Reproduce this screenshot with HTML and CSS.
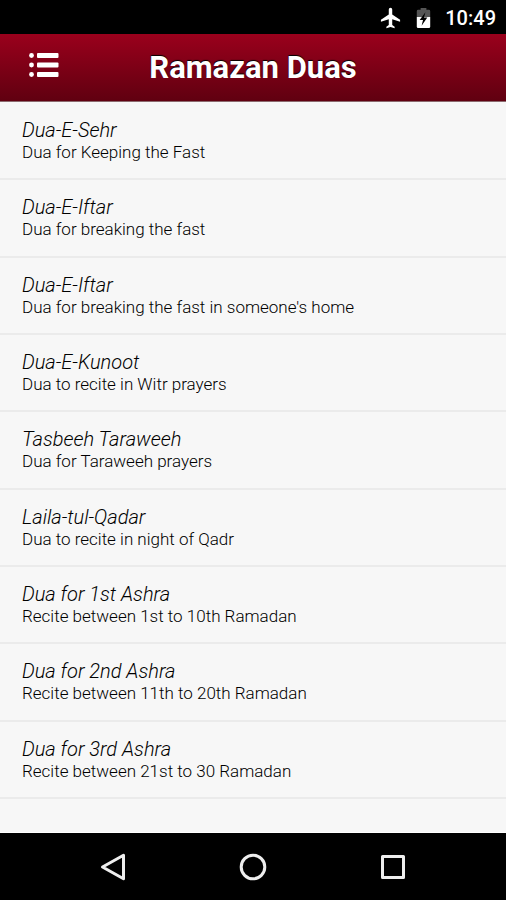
FILE: index.html
```html
<!DOCTYPE html>
<html lang="en">
<head>
    <meta charset="UTF-8">
    <meta name="viewport" content="width=device-width, initial-scale=1.0">
    <title>Ramazan Duas</title>
    <link rel="stylesheet" href="styles.css">
</head>
<body>
    <div class="status-bar">
        <svg class="status-icon" viewBox="0 0 24 24" role="img" aria-label="Airplane mode">
            <path fill="#fff" d="M22 16v-2.200L13.800 8.400V3a1.800 1.800 0 0 0-3.600 0v5.400L2 13.800V16l8.200-2.700v5.900l-2.500 1.800v1.700L12 21.500l4.300 1.200V21l-2.500-1.800v-5.900z"/>
        </svg>
        <svg class="status-icon" viewBox="0 0 24 24" role="img" aria-label="Battery charging">
            <path fill="#555" d="M5 5a1.500 1.500 0 0 1 1.500-1.500H9V1.500h6v2h2.500A1.500 1.500 0 0 1 19 5v6H5z"/>
            <path fill="#fff" d="M5 11h14v10a1.500 1.500 0 0 1-1.500 1.500h-11A1.500 1.500 0 0 1 5 21z"/>
            <path fill="#000" d="M14 6l-6 8h3.500l-1.500 6 6-8.500h-3.500z"/>
        </svg>
        <time class="clock">10:49</time>
    </div>

    <header class="header">
        <button class="menu-button" type="button" aria-label="Menu">
            <svg width="30" height="26" viewBox="0 0 30 26" fill="#fff">
                <circle cx="2.500" cy="3.500" r="2.400"/>
                <circle cx="2.500" cy="13" r="2.400"/>
                <circle cx="2.500" cy="22.500" r="2.400"/>
                <rect x="8" y="1" width="21.500" height="5" rx="1"/>
                <rect x="8" y="10.500" width="21.500" height="5" rx="1"/>
                <rect x="8" y="20" width="21.500" height="5" rx="1"/>
            </svg>
        </button>
        <h1>Ramazan Duas</h1>
    </header>

    <main class="content">
        <ul class="dua-list">
            <li><a class="dua" href="#sehr"><span class="dua-name">Dua-E-Sehr</span><span class="dua-info">Dua for Keeping the Fast</span></a></li>
            <li><a class="dua" href="#iftar"><span class="dua-name">Dua-E-Iftar</span><span class="dua-info">Dua for breaking the fast</span></a></li>
            <li><a class="dua" href="#iftar-home"><span class="dua-name">Dua-E-Iftar</span><span class="dua-info">Dua for breaking the fast in someone's home</span></a></li>
            <li><a class="dua" href="#kunoot"><span class="dua-name">Dua-E-Kunoot</span><span class="dua-info">Dua to recite in Witr prayers</span></a></li>
            <li><a class="dua" href="#taraweeh"><span class="dua-name">Tasbeeh Taraweeh</span><span class="dua-info">Dua for Taraweeh prayers</span></a></li>
            <li><a class="dua" href="#qadar"><span class="dua-name">Laila-tul-Qadar</span><span class="dua-info">Dua to recite in night of Qadr</span></a></li>
            <li><a class="dua" href="#ashra-1"><span class="dua-name">Dua for 1st Ashra</span><span class="dua-info">Recite between 1st to 10th Ramadan</span></a></li>
            <li><a class="dua" href="#ashra-2"><span class="dua-name">Dua for 2nd Ashra</span><span class="dua-info">Recite between 11th to 20th Ramadan</span></a></li>
            <li><a class="dua" href="#ashra-3"><span class="dua-name">Dua for 3rd Ashra</span><span class="dua-info">Recite between 21st to 30 Ramadan</span></a></li>
        </ul>
    </main>

    <nav class="nav-bar">
        <button class="nav-button" type="button" aria-label="Back">
            <svg width="28" height="28" viewBox="0 0 28 28"><path d="M3.500 14L24.500 2.200v23.600z"/></svg>
        </button>
        <button class="nav-button" type="button" aria-label="Home">
            <svg width="28" height="28" viewBox="0 0 28 28"><circle cx="14" cy="14" r="11.800"/></svg>
        </button>
        <button class="nav-button" type="button" aria-label="Recent apps">
            <svg width="28" height="28" viewBox="0 0 28 28"><rect x="3.500" y="3.500" width="21" height="21"/></svg>
        </button>
    </nav>
</body>
</html>
```
FILE: styles.css
```css
* {
    margin: 0;
    padding: 0;
    box-sizing: border-box;
}

body {
    display: flex;
    flex-direction: column;
    min-height: 100vh;
    font-family: Roboto, sans-serif;
    background-color: #f7f7f7;
    color: #000;
}

button {
    border: none;
    background: none;
    cursor: pointer;
}

svg {
    display: block;
}

.status-bar {
    display: flex;
    align-items: center;
    justify-content: flex-end;
    gap: 10px;
    height: 34px;
    padding: 2px 10px 0 0;
    background: #000;
}

.status-icon {
    width: 23px;
    height: 24px;
}

.clock {
    font-size: 20px;
    font-weight: 500;
    color: #fff;
}

.header {
    display: grid;
    grid-template-columns: 88px 1fr 88px;
    align-items: center;
    height: 68px;
    background: linear-gradient(#9a001c, #600010);
    border-bottom: 1px solid #8c6a6e;
}

.menu-button {
    padding: 8px 0 14px 29px;
}

.header h1 {
    text-align: center;
    font-size: 31px;
    font-weight: 700;
    line-height: 36px;
    color: #fff;
    text-shadow: 0 -1px 1px #000;
}

.content {
    flex: 1;
    display: flex;
    flex-direction: column;
    padding: 1px 0 33px;
    border-bottom: 1px solid #fff;
}

.dua-list {
    flex: 1;
    display: grid;
    grid-auto-rows: 1fr;
    list-style: none;
}

.dua-list li {
    border-bottom: 2px solid #ebebeb;
}

.dua {
    display: flex;
    flex-direction: column;
    padding: 15px 22px 14px;
    text-decoration: none;
    color: inherit;
}

.dua-name {
    font-size: 20px;
    font-style: italic;
    font-weight: 300;
    line-height: 24px;
}

.dua-info {
    font-size: 17px;
    font-weight: 300;
    line-height: 20px;
}

.nav-bar {
    display: flex;
    justify-content: center;
    height: 67px;
    background: #000;
}

.nav-button {
    display: grid;
    place-items: center;
    width: 140px;
}

.nav-button svg {
    fill: none;
    stroke: #eee;
    stroke-width: 3;
    stroke-linejoin: round;
}
```
